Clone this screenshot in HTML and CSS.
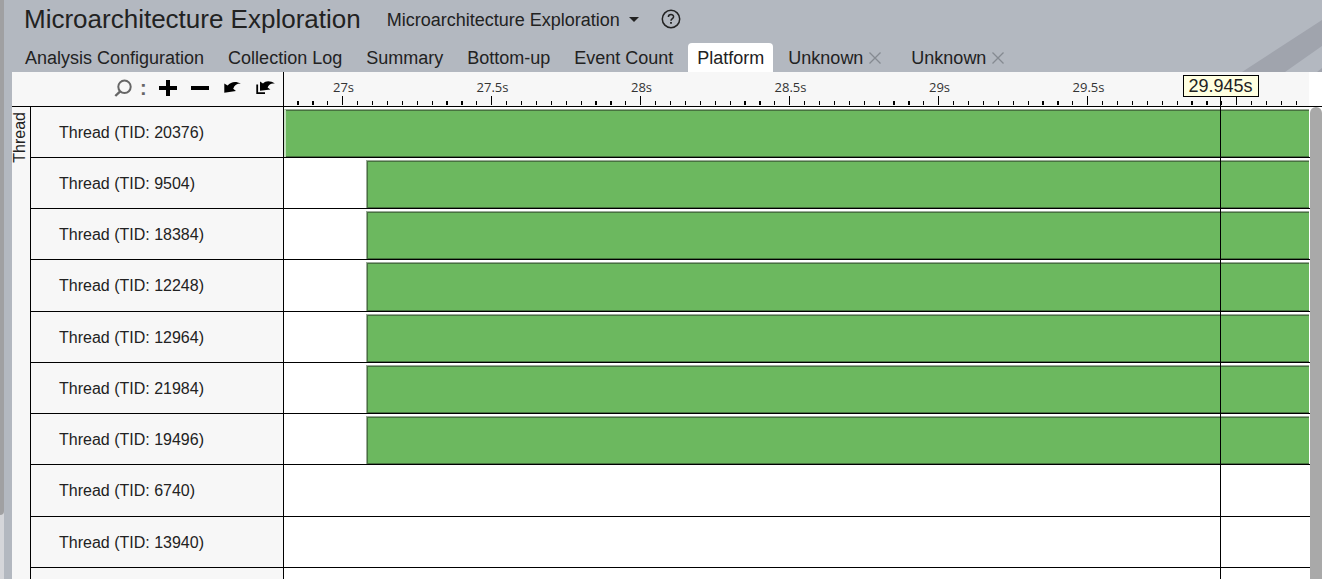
FILE: index.html
```html
<!DOCTYPE html>
<html lang="en">
<head>
<meta charset="utf-8">
<title>Microarchitecture Exploration</title>
<link rel="stylesheet" href="styles.css">
</head>
<body>
<div class="app">
  <div class="rail"><div class="rail-thumb"></div></div>
  <main class="page">
    <svg class="backdrop" width="80" height="72" viewBox="0 0 80 72" aria-hidden="true"><path d="M0 72 80 20V46L43 72ZM75 72 80 68V72Z" fill="#a0a4ad"/></svg>
    <header class="title-bar">
      <h1 class="title">Microarchitecture Exploration</h1>
      <button class="viewpoint" type="button">Microarchitecture Exploration
        <svg width="10" height="6" viewBox="0 0 10 6" aria-hidden="true"><path d="M0 0H10L5 5Z" fill="#222"/></svg>
      </button>
      <button class="help" type="button" aria-label="Help">
        <svg width="20" height="20" viewBox="0 0 20 20" fill="none" stroke="#222" aria-hidden="true"><circle cx="10" cy="10" r="8.7" stroke-width="1.5"/><path d="M7.4 8C7.4 4.7 12.6 4.7 12.6 7.8C12.6 9.6 10 9.6 10 11.8" stroke-width="1.5"/><path d="M10 13V14.8" stroke-width="1.8"/></svg>
      </button>
    </header>
    <nav class="tabs">
      <button class="tab" type="button">Analysis Configuration</button>
      <button class="tab" type="button">Collection Log</button>
      <button class="tab" type="button">Summary</button>
      <button class="tab" type="button">Bottom-up</button>
      <button class="tab" type="button">Event Count</button>
      <button class="tab active" type="button">Platform</button>
      <div class="tab-group"><button class="tab" type="button">Unknown</button><button class="close" type="button" aria-label="Close tab"><svg width="12" height="12" viewBox="0 0 12 12" aria-hidden="true"><path d="M0.5 0.5 11.5 11.5M11.5 0.5 0.5 11.5" stroke="#858a91" stroke-width="1.3"/></svg></button></div>
      <div class="tab-group"><button class="tab" type="button">Unknown</button><button class="close" type="button" aria-label="Close tab"><svg width="12" height="12" viewBox="0 0 12 12" aria-hidden="true"><path d="M0.5 0.5 11.5 11.5M11.5 0.5 0.5 11.5" stroke="#858a91" stroke-width="1.3"/></svg></button></div>
    </nav>
    <section class="timeline">
      <div class="head">
        <div class="tools">
          <svg width="26" height="18" viewBox="0 0 26 18" aria-hidden="true"><circle cx="10.5" cy="7.8" r="6.2" fill="none" stroke="#666" stroke-width="2"/><path d="M6.2 12.3 1.3 17" stroke="#666" stroke-width="2.4"/></svg>
          <span class="colon">:</span>
          <button class="tool" type="button" aria-label="Zoom in"><svg width="18" height="18" viewBox="0 0 18 18"><path d="M7 1H11V7H18V11H11V17H7V11H0V7H7Z"/></svg></button>
          <button class="tool" type="button" aria-label="Zoom out"><svg width="18" height="18" viewBox="0 0 18 18"><path d="M0 7H18V11H0Z"/></svg></button>
          <button class="tool" type="button" aria-label="Undo zoom"><svg width="18" height="18" viewBox="0 0 18 18"><path d="M1.3 4.5 4.6 6.6C8 2.6 12.5 1.8 18 4.6C14 4.5 11.6 6 10.2 9.8L13 12L1.3 13.8Z"/></svg></button>
          <button class="tool" type="button" aria-label="Reset zoom"><svg width="20" height="18" viewBox="0 0 20 18"><path d="M5 2.5 8 4.4C11 1.6 15.5 1.6 20 4.8C16.5 4 14 5.4 12.6 8.4L15.4 10.6L5 11.8Z"/><path d="M2.2 5.5V14.2H10" fill="none" stroke="#000" stroke-width="1.8"/></svg></button>
        </div>
        <div class="ruler">
          <svg class="ticks" width="100%" height="9" aria-hidden="true">
            <defs><pattern id="scale" x="58" width="149" height="9" patternUnits="userSpaceOnUse"><path d="M0 0H1V9H0ZM15 5H16V9H15ZM30 5H31V9H30ZM45 5H46V9H45ZM60 5H61V9H60ZM75 5H76V9H75ZM90 5H91V9H90ZM104 5H106V9H104ZM119 5H121V9H119ZM134 5H135V9H134Z"/></pattern></defs>
            <rect width="100%" height="9" fill="url(#scale)"/>
          </svg>
          <div class="marks"><span>27s</span><span>27.5s</span><span>28s</span><span>28.5s</span><span>29s</span><span>29.5s</span></div>
        </div>
        <div class="corner"></div>
      </div>
      <div class="body">
        <div class="group"><span>Thread</span></div>
        <div class="rows">
          <div class="row"><div class="name">Thread (TID: 20376)</div><div class="lane"><div class="bar whole"></div></div></div>
          <div class="row"><div class="name">Thread (TID: 9504)</div><div class="lane"><div class="bar"></div></div></div>
          <div class="row"><div class="name">Thread (TID: 18384)</div><div class="lane"><div class="bar"></div></div></div>
          <div class="row"><div class="name">Thread (TID: 12248)</div><div class="lane"><div class="bar"></div></div></div>
          <div class="row"><div class="name">Thread (TID: 12964)</div><div class="lane"><div class="bar"></div></div></div>
          <div class="row"><div class="name">Thread (TID: 21984)</div><div class="lane"><div class="bar"></div></div></div>
          <div class="row"><div class="name">Thread (TID: 19496)</div><div class="lane"><div class="bar"></div></div></div>
          <div class="row"><div class="name">Thread (TID: 6740)</div><div class="lane"></div></div>
          <div class="row"><div class="name">Thread (TID: 13940)</div><div class="lane"></div></div>
          <div class="row"><div class="name"></div><div class="lane"></div></div>
        </div>
        <div class="scroll"></div>
      </div>
      <div class="cursor"><span class="cursor-time">29.945s</span></div>
    </section>
  </main>
</div>
</body>
</html>
```

FILE: styles.css
```css
* { box-sizing: border-box; }
body {
  margin: 0;
  overflow: hidden;
  background: #b3b8c0;
  color: #222;
  font-family: "Liberation Sans", Arial, sans-serif;
}
button {
  margin: 0;
  padding: 0;
  border: 0;
  background: none;
  color: inherit;
  font: inherit;
}
svg { display: block; }

.app { display: flex; height: 100vh; }
.rail { width: 4px; background: #d5d6da; }
.rail-thumb { height: 89%; background: #a0a0a2; border-radius: 0 0 4px 0; }
.page {
  position: relative;
  flex: 1;
  min-width: 0;
  display: flex;
  flex-direction: column;
  padding-left: 8px;
}
.backdrop { position: absolute; top: 0; right: 0; }

.title-bar { display: flex; align-items: center; height: 38px; padding-left: 12px; }
.title { margin: 0; font-size: 26px; font-weight: 400; line-height: 38px; }
.viewpoint { display: flex; align-items: center; gap: 9px; margin-left: 26px; padding-top: 2px; font-size: 18px; }
.help { margin-left: 22px; }

.tabs { display: flex; gap: 6px; height: 34px; padding: 5px 0 0 4px; }
.tab { padding: 0 9px; font-size: 18px; line-height: 30px; border-radius: 4px 4px 0 0; }
.tab.active { background: #fff; }
.tab-group { display: flex; align-items: center; width: 117px; }
.tab-group .tab { padding-right: 6px; }

.timeline {
  position: relative;
  flex: 1;
  min-height: 0;
  display: flex;
  flex-direction: column;
  background: #fff;
}
.head { display: flex; height: 35px; flex: none; border-bottom: 1px solid #000; background: #f7f7f7; }
.tools {
  display: flex;
  align-items: center;
  width: 272px;
  padding: 0 8px 3px 0;
  justify-content: flex-end;
  border-right: 1px solid #000;
}
.colon { width: 19px; color: #666; font-size: 20px; font-weight: 700; line-height: 20px; }
.tool { margin-right: 14px; }
.tool:last-child { margin-right: 0; }
.ruler { position: relative; flex: 1; overflow: hidden; }
.ticks { position: absolute; left: 0; bottom: 1px; }
.marks { display: flex; margin-left: -15px; padding-top: 6px; }
.marks span {
  flex: 0 0 149px;
  text-align: center;
  color: #333;
  font-family: "Open Sans", "Noto Sans", sans-serif;
  font-size: 13px;
  line-height: 18px;
}
.corner { width: 13px; background: #fff; }

.body { display: flex; flex: 1; min-height: 0; overflow: hidden; }
.group { width: 19px; padding-top: 5px; background: #f7f7f7; border-right: 1px solid #000; }
.group span { display: block; writing-mode: vertical-rl; transform: rotate(180deg); font-size: 16px; line-height: 16px; }
.rows { flex: 1; min-width: 0; }
.row { display: flex; height: 51px; border-bottom: 1px solid #000; }
.row:nth-child(4n) { height: 52px; }
.name {
  width: 253px;
  padding: 1px 0 0 28px;
  font-size: 16px;
  line-height: 50px;
  background: #f7f7f7;
  border-right: 1px solid #000;
}
.lane { flex: 1; padding: 2px 1px 0 82px; }
.lane:has(.whole) { padding-left: 0; }
.bar {
  height: 100%;
  background: #6cb85f;
  border: solid #9cab99;
  border-width: 1px 0 0 1px;
  box-shadow: inset 1px 1px #47723f, inset 0 -1px #47723f;
}
.bar.whole {
  border-left: 2px solid #c4dfbf;
  box-shadow: inset 0 1px #47723f, inset 0 -1px #47723f;
}
.scroll { width: 12px; background: #a9a9a9; border-radius: 6px 6px 0 0; }

.cursor {
  position: absolute;
  top: 3px;
  bottom: 0;
  left: 1208px;
  width: 1px;
  display: flex;
  justify-content: center;
  background: #000;
}
.cursor-time {
  flex: none;
  align-self: flex-start;
  width: 76px;
  text-align: center;
  font-size: 18px;
  line-height: 20px;
  background: #ffffe1;
  border: 1px solid #000;
}
```
